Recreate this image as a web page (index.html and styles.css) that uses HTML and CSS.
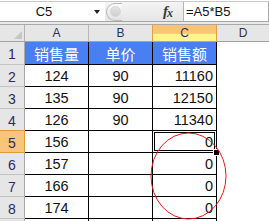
FILE: index.html
```html
<!DOCTYPE html>
<html lang="zh">
<head>
<meta charset="utf-8">
<title>Sheet</title>
<link rel="stylesheet" href="styles.css">
</head>
<body>
<div class="app">
  <div class="fbar">
    <div class="namebox"><span class="ref">C5</span><span class="caret"></span></div>
    <div class="ctrl"><span class="knob"><span class="dot"></span></span><span class="fx">f<span class="sub">x</span></span></div>
    <div class="formula">=A5*B5</div>
  </div>
  <div class="strip"></div>
  <div class="sheet">
    <div class="grid">
      <div class="corner"><span class="tri"></span></div>
      <div class="ch">A</div>
      <div class="ch">B</div>
      <div class="ch sel">C</div>
      <div class="ch last">D</div>

      <div class="rh r1">1</div>
      <div class="c hd">销售量</div>
      <div class="c hd">单价</div>
      <div class="c hd">销售额</div>
      <div class="e r1"></div>

      <div class="rh">2</div>
      <div class="c">124</div>
      <div class="c">90</div>
      <div class="c num">11160</div>
      <div class="e"></div>

      <div class="rh">3</div>
      <div class="c">135</div>
      <div class="c">90</div>
      <div class="c num">12150</div>
      <div class="e"></div>

      <div class="rh">4</div>
      <div class="c">126</div>
      <div class="c">90</div>
      <div class="c num">11340</div>
      <div class="e"></div>

      <div class="rh rsel">5</div>
      <div class="c">156</div>
      <div class="c"></div>
      <div class="c num">0</div>
      <div class="e"></div>

      <div class="rh">6</div>
      <div class="c">157</div>
      <div class="c"></div>
      <div class="c num">0</div>
      <div class="e"></div>

      <div class="rh">7</div>
      <div class="c">166</div>
      <div class="c"></div>
      <div class="c num">0</div>
      <div class="e"></div>

      <div class="rh">8</div>
      <div class="c">174</div>
      <div class="c"></div>
      <div class="c num">0</div>
      <div class="e"></div>

      <div class="rh"></div>
      <div class="c"></div>
      <div class="c"></div>
      <div class="c num"></div>
      <div class="e"></div>
    </div>
    <div class="selbox"><span class="handle"></span></div>
    <svg class="mark" width="269" height="196" viewBox="0 0 269 196">
      <ellipse cx="188.5" cy="151" rx="37.5" ry="43" fill="none" stroke="#e8141a" stroke-width="1"/>
    </svg>
  </div>
</div>
</body>
</html>
```

FILE: styles.css
```css
html, body {
  margin: 0;
  padding: 0;
  background: #fff;
  overflow: hidden;
}
.app {
  width: 269px;
  height: 221px;
  overflow: hidden;
  font-family: "Liberation Sans", Arial, sans-serif;
  background: #fff;
}
.fbar {
  display: flex;
  box-sizing: border-box;
  margin-top: 1px;
  border-top: 1px solid #c9c9c9;
  border-bottom: 1px solid #a7a7a7;
  border-right: 1px solid #a7a7a7;
  width: 269px;
  height: 21px;
}
.namebox {
  width: 105px;
  display: flex;
  align-items: center;
  background: #fff;
  position: relative;
}
.ref {
  width: 88px;
  text-align: center;
  font-size: 13px;
  color: #111;
}
.caret {
  width: 0;
  height: 0;
  border-left: 3px solid transparent;
  border-right: 3px solid transparent;
  border-top: 4px solid #222;
  margin-left: 6px;
  margin-top: 1px;
}
.ctrl {
  width: 78px;
  background: linear-gradient(#f4f4f4, #e6e6e6);
  border-right: 1px solid #b4b4b4;
  display: flex;
  align-items: center;
  position: relative;
}
.knob {
  width: 15px;
  height: 16px;
  margin-left: 1px;
  border: 1px solid #b9b9b9;
  border-right: none;
  border-radius: 9px 0 0 9px;
  background: linear-gradient(#fafafa, #e2e2e2);
  display: flex;
  align-items: center;
  justify-content: center;
}
.dot {
  width: 9px;
  height: 9px;
  border-radius: 50%;
  background: linear-gradient(#e4e4e4, #cfcfcf);
  border: 1px solid #d6d6d6;
  margin-left: 2px;
}
.fx {
  margin-left: 41px;
  font-family: "Liberation Serif", "Times New Roman", serif;
  font-style: italic;
  font-weight: bold;
  font-size: 15px;
  color: #3a3a3a;
  letter-spacing: -1px;
  line-height: 1;
}
.fx .sub {
  font-size: 12px;
  position: relative;
  top: 1px;
}
.formula {
  flex: 1;
  background: #fff;
  font-size: 13px;
  color: #111;
  padding-left: 2px;
  display: flex;
  align-items: center;
}
.strip {
  height: 3px;
  background: #e9e9e9;
  border-bottom: 1px solid #a9a9a9;
  box-sizing: border-box;
}
.sheet {
  position: relative;
  height: 196px;
}
.grid {
  display: grid;
  grid-template-columns: 25px 64px 64px 64px 52px;
  grid-template-rows: 17px 23px repeat(7, 22px) 22px;
}
.grid > div {
  box-sizing: border-box;
}
.corner {
  background: #e6e6e6;
  border-right: 1px solid #b3b3b3;
  border-bottom: 1px solid #a3a3a3;
  position: relative;
}
.tri {
  position: absolute;
  right: 2px;
  bottom: 2px;
  width: 0;
  height: 0;
  border-left: 8px solid transparent;
  border-bottom: 8px solid #c6c6c6;
}
.ch {
  background: #e6e6e6;
  border-right: 1px solid #b8b8b8;
  border-bottom: 1px solid #a3a3a3;
  font-size: 12px;
  color: #2c3550;
  display: flex;
  align-items: center;
  justify-content: center;
}
.ch.sel {
  background: linear-gradient(#f8c373 0, #f8c676 52%, #fff38b 58%, #fff68f 100%);
  border-left: 1px solid #e0a23f;
  border-right: 1px solid #e0a23f;
  border-bottom: 1px solid #e0a23f;
  margin-left: -1px;
}
.ch.last {
  border-right: none;
}
.rh {
  background: #e6e6e6;
  border-right: 1px solid #a9a9a9;
  border-bottom: 1px solid #c2c2c2;
  font-size: 14px;
  color: #2d2a5e;
  display: flex;
  align-items: center;
  justify-content: center;
  padding-top: 2px;
}
.rh.rsel {
  background: #f8c57c;
  border-right: 1px solid #e09a38;
  border-bottom: 1px solid #e09a38;
  border-top: 1px solid #e09a38;
  margin-top: -1px;
}
.c {
  border-right: 1px solid #000;
  border-bottom: 1px solid #000;
  font-size: 14.5px;
  color: #111;
  display: flex;
  align-items: center;
  justify-content: center;
  padding-top: 1px;
}
.c.hd {
  background: #4a7ef3;
  color: #fff;
  font-family: "Noto Sans CJK SC", "Liberation Sans", sans-serif;
  font-size: 15px;
  padding-top: 0;
}
.c.num {
  justify-content: flex-end;
  padding-right: 3px;
}
.e {
  background: #fff;
}
.selbox {
  position: absolute;
  left: 152px;
  top: 105px;
  width: 65px;
  height: 23px;
  box-sizing: border-box;
  border: 1px solid #000;
  box-shadow: inset 0 0 0 1px #fff, inset 0 0 0 2px #000;
}
.handle {
  position: absolute;
  right: -4px;
  bottom: -4px;
  width: 5px;
  height: 5px;
  background: #000;
  border: 1px solid #fff;
  box-sizing: content-box;
}
.mark {
  position: absolute;
  left: 0;
  top: 0;
  pointer-events: none;
}
```
